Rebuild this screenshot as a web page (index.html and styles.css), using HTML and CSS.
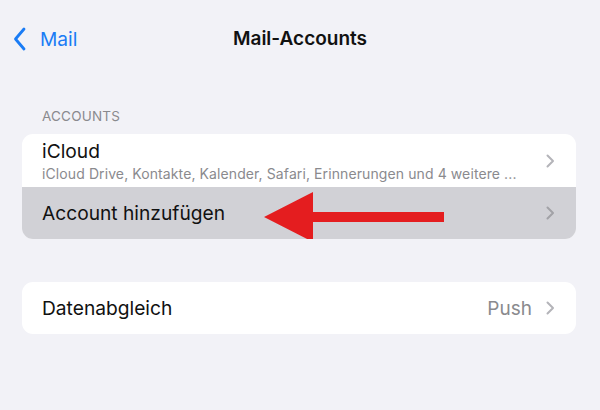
FILE: index.html
```html
<!DOCTYPE html>
<html>
	<head>
		<meta charset="UTF-8">
		<title>Mail-Accounts</title>
		<link rel="stylesheet" href="styles.css">
	</head>
	<body>
		<div class="navbar">
			<a href="#" class="back">
				<svg class="backIcon" width="13" height="24" viewBox="0 0 13 24"><path d="M11 2 L2.5 12 L11 22" fill="none" stroke="#1a7cf5" stroke-width="2.8" stroke-linecap="round" stroke-linejoin="round"/></svg>
				<span>Mail</span>
			</a>
			<div class="title">Mail-Accounts</div>
		</div>

		<div class="sectionHead">ACCOUNTS</div>
		<div class="group">
			<div class="row rowTall">
				<div class="rowText">
					<div class="label">iCloud</div>
					<div class="sub">iCloud Drive, Kontakte, Kalender, Safari, Erinnerungen und 4 weitere ...</div>
				</div>
				<svg class="chev" width="9" height="14" viewBox="0 0 9 14"><path d="M1.5 1.5 L7 7 L1.5 12.5" fill="none" stroke="#b4b4b9" stroke-width="2" stroke-linecap="round" stroke-linejoin="round"/></svg>
			</div>
			<div class="row rowActive">
				<div class="label">Account hinzufügen</div>
				<svg class="chev" width="9" height="14" viewBox="0 0 9 14"><path d="M1.5 1.5 L7 7 L1.5 12.5" fill="none" stroke="#a2a2a7" stroke-width="2" stroke-linecap="round" stroke-linejoin="round"/></svg>
				<svg class="arrow" width="182" height="52" viewBox="0 0 182 52"><polygon points="0,25 49,0 49,20 180,20 180,30 49,30 49,50" fill="#e41d1f"/></svg>
			</div>
		</div>

		<div class="group group2">
			<div class="row">
				<div class="label">Datenabgleich</div>
				<div class="value">Push</div>
				<svg class="chev" width="9" height="14" viewBox="0 0 9 14"><path d="M1.5 1.5 L7 7 L1.5 12.5" fill="none" stroke="#b4b4b9" stroke-width="2" stroke-linecap="round" stroke-linejoin="round"/></svg>
			</div>
		</div>
	</body>
</html>
```
FILE: styles.css
```css
body{
	margin: 0;
	padding: 0;
	background: #f2f2f7;
	font-family: Inter, "Noto Sans", sans-serif;
	color: #111;
	height: 410px;
	overflow: hidden;
}
a{
	text-decoration: none;
}
.navbar{
	position: relative;
	height: 76px;
	display: flex;
	align-items: center;
	justify-content: center;
}
.back{
	position: absolute;
	left: 13px;
	top: 27px;
	display: flex;
	align-items: center;
	gap: 14px;
	color: #1a7cf5;
	font-size: 19.2px;
}
.title{
	font-size: 19px;
	font-weight: 600;
}
.sectionHead{
	margin: 32px 0 0 42px;
	font-size: 13.5px;
	color: #8a8a8e;
	letter-spacing: 0.2px;
	height: 26px;
}
.group{
	margin: 0 24px 0 22px;
	background: #fff;
	border-radius: 11px;
	overflow: hidden;
}
.group2{
	margin-top: 43px;
}
.row{
	position: relative;
	display: flex;
	align-items: center;
	height: 52px;
	padding: 0 21px 0 20px;
}
.rowTall{
	height: 53px;
}
.rowActive{
	background: #d1d1d6;
}
.rowText{
	flex: 1;
	min-width: 0;
}
.label{
	flex: 1;
	font-size: 19.2px;
}
.rowTall .label{
	line-height: 22px;
	margin-top: 1px;
}
.sub{
	font-size: 14px;
	color: #8a8a8e;
	white-space: nowrap;
	margin-top: 3px;
	letter-spacing: 0.1px;
}
.value{
	font-size: 19px;
	color: #8a8a8e;
	margin-right: 14px;
}
.chev{
	flex: none;
	margin-left: 24px;
}
.group2 .chev{
	margin-left: 0;
}
.arrow{
	position: absolute;
	left: 242px;
	top: 5px;
}
```
